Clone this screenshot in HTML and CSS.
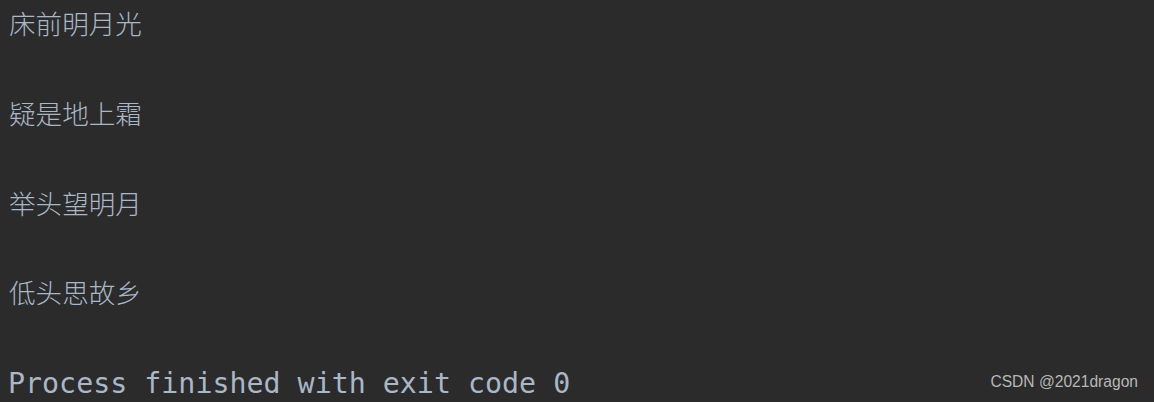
FILE: index.html
```html
<!DOCTYPE html>
<html>
<head>
<meta charset="utf-8">
<link rel="stylesheet" href="styles.css">
</head>
<body>
<div class="console">
  <div class="line cjk">床前明月光</div>
  <div class="line blank"></div>
  <div class="line cjk">疑是地上霜</div>
  <div class="line blank"></div>
  <div class="line cjk">举头望明月</div>
  <div class="line blank"></div>
  <div class="line cjk">低头思故乡</div>
  <div class="line blank"></div>
  <div class="line mono">Process finished with exit code 0</div>
</div>
<div class="watermark">CSDN @2021dragon</div>
</body>
</html>
```
FILE: styles.css
```css
html, body {
  margin: 0;
  padding: 0;
  background: #2b2b2b;
  width: 1154px;
  height: 402px;
  overflow: hidden;
}
.console {
  display: flex;
  flex-direction: column;
  padding: 1px 0 0 8px;
  color: #a9b7c6;
}
.line {
  height: 44.9px;
  line-height: 44.9px;
  white-space: pre;
}
.cjk {
  font-family: "Noto Sans CJK SC", sans-serif;
  font-size: 26.6px;
  font-weight: 300;
  padding-left: 1px;
}
.mono {
  font-family: "DejaVu Sans Mono", monospace;
  font-size: 28.3px;
  padding-top: 2px;
}
.watermark {
  position: absolute;
  right: 16px;
  bottom: 11px;
  font-family: "Liberation Sans", Arial, sans-serif;
  font-size: 15.6px;
  color: #b8b8b8;
}
```
